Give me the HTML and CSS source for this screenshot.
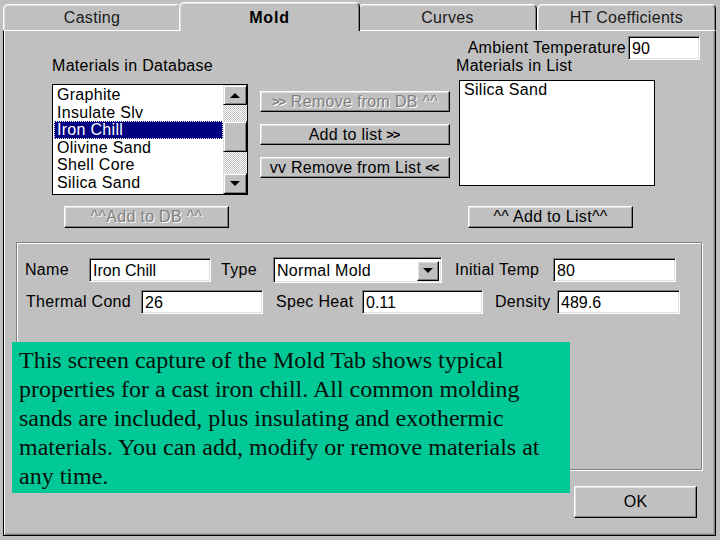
FILE: index.html
```html
<!DOCTYPE html>
<html>
<head>
<meta charset="utf-8">
<title>Mold</title>
<link rel="stylesheet" href="styles.css">
</head>
<body>
<div class="screen">
  <div class="tabs">
    <div class="tab t-casting">Casting</div>
    <div class="tab t-mold active">Mold</div>
    <div class="tab t-curves">Curves</div>
    <div class="tab t-ht">HT Coefficients</div>
  </div>
  <div class="panel">
    <div class="ambient">
      <span class="amb-label">Ambient Temperature</span>
      <div class="field amb-field">90</div>
    </div>
    <div class="lists">
      <div class="col-db">
        <div class="label">Materials in Database</div>
        <div class="listbox db">
          <div class="items">
            <div class="item">Graphite</div>
            <div class="item">Insulate Slv</div>
            <div class="item sel">Iron Chill</div>
            <div class="item">Olivine Sand</div>
            <div class="item">Shell Core</div>
            <div class="item">Silica Sand</div>
          </div>
          <div class="scrollbar">
            <div class="sbtn up"><span class="tri-up"></span></div>
            <div class="track tr-a"></div>
            <div class="thumb"></div>
            <div class="track tr-b"></div>
            <div class="sbtn down"><span class="tri-down"></span></div>
          </div>
        </div>
        <div class="btn disabled btn-adddb">^^Add to DB ^^</div>
      </div>
      <div class="col-mid">
        <div class="btn disabled mbtn m1"><b class="chev">&gt;&gt;</b>&nbsp;Remove from DB ^^</div>
        <div class="btn mbtn m2">Add to list <b class="chev">&gt;&gt;</b></div>
        <div class="btn mbtn m3">vv Remove from List <b class="chev">&lt;&lt;</b></div>
      </div>
      <div class="col-list">
        <div class="label">Materials in List</div>
        <div class="listbox inlist">
          <div class="items">
            <div class="item">Silica Sand</div>
          </div>
        </div>
        <div class="btn btn-addlist">^^ Add to List^^</div>
      </div>
    </div>
    <div class="group">
      <div class="grow r1">
        <span class="glabel l-name">Name</span>
        <div class="field f-name">Iron Chill</div>
        <span class="glabel l-type">Type</span>
        <div class="field select">
          <span>Normal Mold</span>
          <div class="btn dd-btn"><span class="tri-down"></span></div>
        </div>
        <span class="glabel l-init">Initial Temp</span>
        <div class="field f-init">80</div>
      </div>
      <div class="grow r2">
        <span class="glabel l-therm">Thermal Cond</span>
        <div class="field f-therm">26</div>
        <span class="glabel l-spec">Spec Heat</span>
        <div class="field f-spec">0.11</div>
        <span class="glabel l-dens">Density</span>
        <div class="field f-dens">489.6</div>
      </div>
    </div>
    <div class="ok-row"><div class="btn ok">OK</div></div>
  </div>
  <div class="note">This screen capture of the Mold Tab shows typical<br>properties for a cast iron chill. All common molding<br>sands are included, plus insulating and exothermic<br>materials. You can add, modify or remove materials at<br>any time.</div>
</div>
</body>
</html>
```

FILE: styles.css
```css
html, body {
  margin: 0;
  padding: 0;
  background: #c0c0c0;
}
.screen {
  position: relative;
  width: 720px;
  height: 540px;
  overflow: hidden;
  font-family: "Liberation Sans", Arial, sans-serif;
  font-size: 16px;
  letter-spacing: 0.3px;
  color: #000;
  background: #c0c0c0;
}

/* Tabs */
.tabs {
  display: flex;
  align-items: flex-end;
  height: 28px;
  padding-top: 2px;
  margin-left: 3px;
}
.tab {
  box-sizing: border-box;
  height: 26px;
  display: flex;
  align-items: center;
  justify-content: center;
  border-top: 1px solid #fff;
  border-left: 1px solid #fff;
  border-right: 1px solid #000;
  border-radius: 5px 5px 0 0;
  box-shadow: inset -1px 0 0 #808080, inset 1px 1px 0 #dfdfdf;
  background: #c0c0c0;
  padding-top: 1px;
  color: #1a1a1a;
}
.t-casting { width: 178px; }
.t-mold { width: 177px; }
.t-curves { width: 179px; }
.t-ht { width: 179px; }
.tab.active {
  position: relative;
  z-index: 2;
  width: 181px;
  height: 29px;
  margin: 0 -2px -1px -2px;
  font-weight: bold;
  padding-top: 2px;
  letter-spacing: 0.8px;
  color: #000;
}

/* Panel */
.panel {
  box-sizing: border-box;
  width: 713px;
  height: 506px;
  margin-left: 3px;
  border-top: 1px solid #fff;
  border-left: 1px solid #000;
  border-right: 1px solid #000;
  border-bottom: 1px solid #000;
  box-shadow: inset 1px 0 0 #fff, inset -1px -1px 0 #808080, inset -2px -2px 0 #a8a8a8;
}

.ambient {
  display: flex;
  justify-content: flex-end;
  align-items: center;
  height: 24px;
  margin-top: 5px;
  padding-right: 15px;
}
.amb-label { margin-right: 2px; }
.amb-field { width: 72px; height: 24px; }

.field {
  box-sizing: border-box;
  background: #fff;
  border: 1px solid;
  border-color: #808080 #fff #fff #808080;
  box-shadow: inset 1px 1px 0 #000, inset -1px -1px 0 #dfdfdf;
  display: flex;
  align-items: center;
  padding-left: 3px;
  padding-top: 1px;
  letter-spacing: 0;
}

.lists {
  display: flex;
  align-items: flex-start;
  margin-top: -3px;
}
.label {
  height: 18px;
  line-height: 18px;
  white-space: nowrap;
}
.col-db { margin-left: 48px; width: 196px; }
.col-mid {
  margin-left: 12px;
  width: 190px;
  display: flex;
  flex-direction: column;
  gap: 12px;
  padding-top: 34px;
}
.col-list { margin-left: 6px; width: 244px; }

.listbox {
  box-sizing: border-box;
  border: 1px solid #000;
  background: #fff;
  display: flex;
}
.listbox.db { margin-top: 9px; height: 111px; }
.listbox.inlist { margin-top: 5px; margin-left: 3px; width: 196px; height: 106px; }
.items { flex: 1; padding-top: 1px; }
.inlist .items { padding-top: 0; }
.item {
  height: 17.5px;
  line-height: 17.5px;
  margin-left: 1px;
  padding-left: 3px;
  white-space: nowrap;
}
.item.sel {
  background: #000080;
  color: #fff;
  outline: 1px dotted #fff;
  outline-offset: -1px;
}

.scrollbar {
  width: 24px;
  display: flex;
  flex-direction: column;
}
.sbtn {
  box-sizing: border-box;
  background: #c0c0c0;
  border: 1px solid;
  border-color: #dfdfdf #000 #000 #dfdfdf;
  box-shadow: inset 1px 1px 0 #fff, inset -1px -1px 0 #808080;
  display: flex;
  align-items: center;
  justify-content: center;
}
.sbtn.up { height: 20px; }
.sbtn.down { height: 21px; }
.track {
  background: repeating-conic-gradient(#fff 0 25%, #c0c0c0 0 50%) 0 0 / 2px 2px;
}
.tr-a { height: 16px; }
.tr-b { height: 21px; }
.thumb {
  box-sizing: border-box;
  height: 31px;
  background: #c0c0c0;
  border: 1px solid;
  border-color: #dfdfdf #000 #000 #dfdfdf;
  box-shadow: inset 1px 1px 0 #fff, inset -1px -1px 0 #808080;
}
.tri-up {
  width: 0;
  height: 0;
  border-left: 5px solid transparent;
  border-right: 5px solid transparent;
  border-bottom: 5px solid #000;
}
.tri-down {
  width: 0;
  height: 0;
  border-left: 5px solid transparent;
  border-right: 5px solid transparent;
  border-top: 5px solid #000;
}

/* Buttons */
.btn {
  box-sizing: border-box;
  background: #c0c0c0;
  border: 1px solid;
  border-color: #fff #000 #000 #fff;
  box-shadow: inset -1px -1px 0 #808080, inset 1px 1px 0 #dfdfdf;
  display: flex;
  align-items: center;
  justify-content: center;
  white-space: nowrap;
}
.btn.disabled {
  color: #808080;
  text-shadow: 1px 1px 0 #fff;
}
.chev { font-size: 13px; letter-spacing: -1px; margin: 0 2px 0 4px; }
.m1 .chev { margin: 0 1px 0 0; }
.mbtn { height: 21px; }
.btn-adddb { margin: 11px 0 0 12px; width: 165px; height: 22px; }
.btn-addlist { margin: 20px 0 0 12px; width: 165px; height: 22px; }

/* Group */
.group {
  box-sizing: border-box;
  margin: 14px 0 0 12px;
  width: 686px;
  height: 228px;
  border: 1px solid #808080;
  box-shadow: inset 1px 1px 0 #fff, 1px 1px 0 #fff;
  padding-top: 14px;
}
.grow {
  display: flex;
  align-items: center;
  height: 26px;
  white-space: nowrap;
}
.r2 { margin-top: 6px; }
.field.f-name, .field.f-init, .field.f-therm, .field.f-spec, .field.f-dens { height: 24px; }
.l-name { margin-left: 8px; width: 64px; }
.f-name { width: 122px; }
.l-type { margin-left: 10px; width: 52px; }
.select {
  width: 169px;
  height: 26px;
  justify-content: space-between;
  padding-right: 2px;
  letter-spacing: 0.3px;
}
.dd-btn { width: 22px; height: 20px; }
.l-init { margin-left: 13px; width: 98px; }
.f-init { width: 123px; }
.l-therm { margin-left: 9px; width: 115px; }
.f-therm { width: 122px; }
.l-spec { margin-left: 13px; width: 86px; }
.f-spec { width: 121px; }
.l-dens { margin-left: 12px; width: 62px; }
.f-dens { width: 123px; }

.ok-row { margin: 16px 0 0 570px; }
.btn.ok { width: 123px; height: 32px; }

/* Note overlay */
.note {
  position: absolute;
  left: 12px;
  top: 342px;
  box-sizing: border-box;
  width: 558px;
  height: 151px;
  background: #00c896;
  color: #06110b;
  font-family: "Liberation Serif", "Times New Roman", serif;
  font-size: 24px;
  letter-spacing: 0;
  line-height: 29px;
  padding: 4px 0 0 7px;
  white-space: nowrap;
}
```
